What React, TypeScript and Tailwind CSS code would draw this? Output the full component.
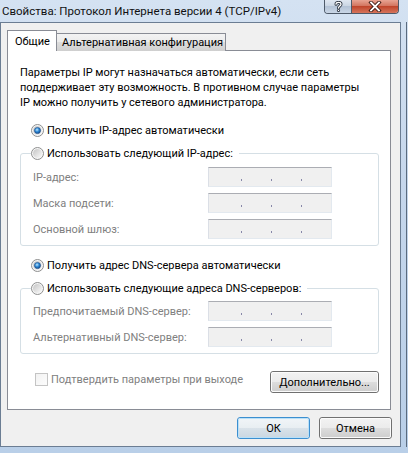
import React from "react";

function Radio({ checked, id }: { checked?: boolean; id: string }) {
  return (
    <svg width="13" height="13" viewBox="0 0 13 13" className="shrink-0 block">
      <defs>
        <linearGradient id={`${id}o`} x1="0" y1="0" x2="1" y2="1">
          <stop offset="0" stopColor="#c4c4c4" />
          <stop offset="1" stopColor="#fbfbfb" />
        </linearGradient>
        <radialGradient id={`${id}d`} cx="0.42" cy="0.38" r="0.7">
          <stop offset="0" stopColor="#bfe8ff" />
          <stop offset="0.45" stopColor="#2f8ad6" />
          <stop offset="1" stopColor="#0d3c7c" />
        </radialGradient>
      </defs>
      <circle cx="6.5" cy="6.5" r="6" fill="#f6f6f6" stroke="#8e8f8f" strokeWidth="1" />
      <circle cx="6.5" cy="6.5" r="4.5" fill={`url(#${id}o)`} />
      {checked && (
        <circle cx="6.5" cy="6.5" r="3.1" fill={`url(#${id}d)`} stroke="#1b4d8a" strokeWidth="0.6" />
      )}
    </svg>
  );
}

function IpBox() {
  return (
    <div className="w-[124px] h-[20px] bg-[#f0f0f0] border border-t-[#abadb3] border-l-[#dbdfe6] border-r-[#e3e9ef] border-b-[#e3e9ef] flex items-end pb-[5px] pl-[32px] gap-[29px]">
      <span className="w-px h-[2px] bg-[#8787a8]" />
      <span className="w-px h-[2px] bg-[#8787a8]" />
      <span className="w-px h-[2px] bg-[#8787a8]" />
    </div>
  );
}

function Row({ label }: { label: string }) {
  return (
    <div className="flex items-center h-[20px]">
      <span className="w-[175px] text-[#808080] whitespace-nowrap">{label}</span>
      <IpBox />
    </div>
  );
}

function Btn({ children, def, wide }: { children: React.ReactNode; def?: boolean; wide?: boolean }) {
  return (
    <div
      className={`h-[22px] ${wide ? "w-[109px]" : "w-[73px]"} rounded-[3px] border ${
        def ? "border-[#3c8fd0]" : "border-[#707070]"
      } overflow-hidden`}
    >
      <div
        className={`h-full w-full rounded-[2px] border ${
          def ? "border-[#b9e0f8]" : "border-[#fbfbfb]"
        } flex items-center justify-center text-black ${
          def
            ? "bg-[linear-gradient(#f0f4f7_0%,#e8eef2_50%,#d9e2e9_50%,#ccd8e2_100%)]"
            : "bg-[linear-gradient(#f2f2f2_0%,#ebebeb_50%,#dddddd_50%,#cfcfcf_100%)]"
        }`}
      >
        {children}
      </div>
    </div>
  );
}

export default function App() {
  return (
    <div className="w-[408px] h-[453px] overflow-hidden flex flex-col bg-[linear-gradient(180deg,#d4e2f2_0%,#c6d7ec_40%,#b9cfe8_100%)] font-['Roboto',sans-serif] text-[11px] leading-[15px] text-black">
      {/* title bar */}
      <div className="h-[22px] flex items-start justify-between shrink-0">
        <div className="pl-[2px] h-[22px] flex items-center whitespace-nowrap text-[11.5px] text-[#111]">
          Свойства: Протокол Интернета версии 4 (TCP/IPv4)
        </div>
        <div className="flex mr-[9px] h-[14px] border border-t-0 border-[#4e5a69] rounded-b-[4px] overflow-hidden">
          <div className="w-[27px] h-full flex items-center justify-center bg-[linear-gradient(#dfe7f1_0%,#c8d4e2_50%,#b4c3d6_50%,#c9d6e6_100%)] border-r border-[#4e5a69]">
            <svg width="9" height="11" viewBox="0 0 9 11">
              <path d="M2 3.2 C2 0.8 7 0.8 7 3.2 C7 5 4.5 5 4.5 7" fill="none" stroke="#2c3440" strokeWidth="3" strokeLinecap="round" />
              <path d="M2 3.2 C2 0.8 7 0.8 7 3.2 C7 5 4.5 5 4.5 7" fill="none" stroke="#fff" strokeWidth="1.3" strokeLinecap="round" />
              <circle cx="4.5" cy="9.4" r="1.5" fill="#2c3440" />
              <circle cx="4.5" cy="9.4" r="0.7" fill="#fff" />
            </svg>
          </div>
          <div className="w-[46px] h-full flex items-center justify-center bg-[linear-gradient(#e8a493_0%,#d0705a_50%,#c0462c_50%,#d6755c_100%)]">
            <svg width="14" height="11" viewBox="0 0 14 11">
              <path d="M3 1.5 L11 9.5 M11 1.5 L3 9.5" stroke="#3a1a14" strokeWidth="3.6" strokeLinecap="square" />
              <path d="M3 1.5 L11 9.5 M11 1.5 L3 9.5" stroke="#fff" strokeWidth="1.8" strokeLinecap="square" />
            </svg>
          </div>
        </div>
      </div>

      {/* body: client area + right frame */}
      <div className="flex-1 flex mb-[6px]">
        <div className="w-[401px] h-full bg-[#f0f0f0] border border-[#6b7d93] flex flex-col">
          {/* tabs */}
          <div className="flex items-end h-[21px] pl-[6px] mt-[7px] -mb-px relative z-10">
            <div className="h-[21px] w-[50px] bg-white border border-b-0 border-[#898c95] pl-[7px] flex items-center">
              Общие
            </div>
            <div className="h-[18px] w-[170px] -ml-px border border-b-0 border-[#898c95] bg-[linear-gradient(#f3f3f3_0%,#ebebeb_50%,#dddddd_50%,#cfcfcf_100%)] pl-[5px] flex items-center whitespace-nowrap">
              Альтернативная конфигурация
            </div>
          </div>

          {/* tab page */}
          <div className="ml-[6px] w-[384px] h-[360px] bg-white border border-[#898c95] flex flex-col pl-[12px] pr-[11px]">
            <div className="mt-[14px] whitespace-nowrap">
              <div>Параметры IP могут назначаться автоматически, если сеть</div>
              <div>поддерживает эту возможность. В противном случае параметры</div>
              <div>IP можно получить у сетевого администратора.</div>
            </div>

            <div className="mt-[12px] h-[17px] flex items-center gap-[3px] ml-[11px]">
              <Radio checked id="r1" />
              <span>Получить IP-адрес автоматически</span>
            </div>

            <fieldset className="mt-[6px] border border-[#d5dfe5] rounded-[3px] p-0 m-0">
              <legend className="ml-[10px] pr-[6px] h-[16px] flex items-center gap-[3px] p-0">
                <Radio id="r2" />
                <span>Использовать следующий IP-адрес:</span>
              </legend>
              <div className="pl-[12px] pt-[6px] pb-[6px] flex flex-col gap-[6px]">
                <Row label="IP-адрес:" />
                <Row label="Маска подсети:" />
                <Row label="Основной шлюз:" />
              </div>
            </fieldset>

            <div className="mt-[11px] h-[17px] flex items-center gap-[3px] ml-[11px]">
              <Radio checked id="r3" />
              <span>Получить адрес DNS-сервера автоматически</span>
            </div>

            <fieldset className="mt-[6px] border border-[#d5dfe5] rounded-[3px] p-0 m-0">
              <legend className="ml-[10px] pr-[6px] h-[16px] flex items-center gap-[3px] p-0">
                <Radio id="r4" />
                <span>Использовать следующие адреса DNS-серверов:</span>
              </legend>
              <div className="pl-[12px] pt-[5px] pb-[6px] flex flex-col gap-[6px]">
                <Row label="Предпочитаемый DNS-сервер:" />
                <Row label="Альтернативный DNS-сервер:" />
              </div>
            </fieldset>

            <div className="mt-[17px] flex items-start justify-between">
              <div className="ml-[15px] mt-[2px] h-[13px] flex items-center gap-[3px]">
                <div className="w-[13px] h-[13px] border border-[#c4c4c4] bg-[linear-gradient(135deg,#f2f2f2,#fcfcfc)]" />
                <span className="text-[#808080]">Подтвердить параметры при выходе</span>
              </div>
              <Btn wide>Дополнительно...</Btn>
            </div>
          </div>

          {/* bottom buttons */}
          <div className="mt-[7px] flex justify-end gap-[9px] pr-[8px]">
            <Btn def>ОК</Btn>
            <Btn>Отмена</Btn>
          </div>
        </div>
        <div className="flex-1 flex">
          <div className="w-[5px]" />
          <div className="w-px bg-[#5b6b7e]" />
        </div>
      </div>
    </div>
  );
}
